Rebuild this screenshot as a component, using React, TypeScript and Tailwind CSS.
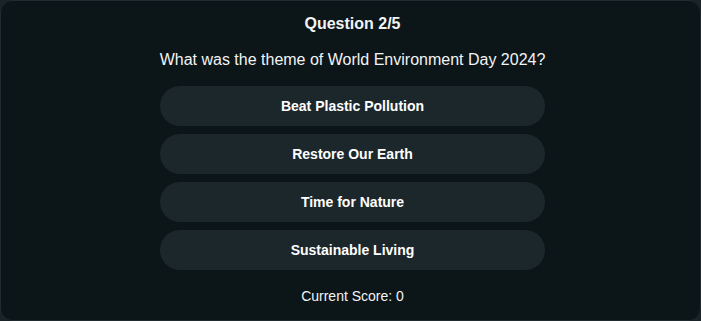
import { useState } from 'react';

const options = ['Beat Plastic Pollution', 'Restore Our Earth', 'Time for Nature', 'Sustainable Living'];

export default function App() {
  const [score] = useState(0);

  return (
    <div className="w-[701px] h-[321px] bg-[#1a2428] font-['Liberation_Sans',Arial,sans-serif]">
      <div className="w-full h-full rounded-xl border border-[#1f2b2f] bg-[#0c1518] flex flex-col items-center pt-[11px] pl-1 text-[#f1f4f5]">
        <h2 className="text-base leading-6 font-bold">Question 2/5</h2>
        <p className="mt-3 text-base leading-6">What was the theme of World Environment Day 2024?</p>

        <div className="mt-[14px] w-[385px] flex flex-col gap-2">
          {options.map(option => (
            <button
              key={option}
              className="h-10 w-full rounded-full bg-[#1c272c] text-sm font-bold text-white hover:bg-[#24323a]"
            >
              {option}
            </button>
          ))}
        </div>

        <p className="mt-4 text-sm leading-5">Current Score: {score}</p>
      </div>
    </div>
  );
}
